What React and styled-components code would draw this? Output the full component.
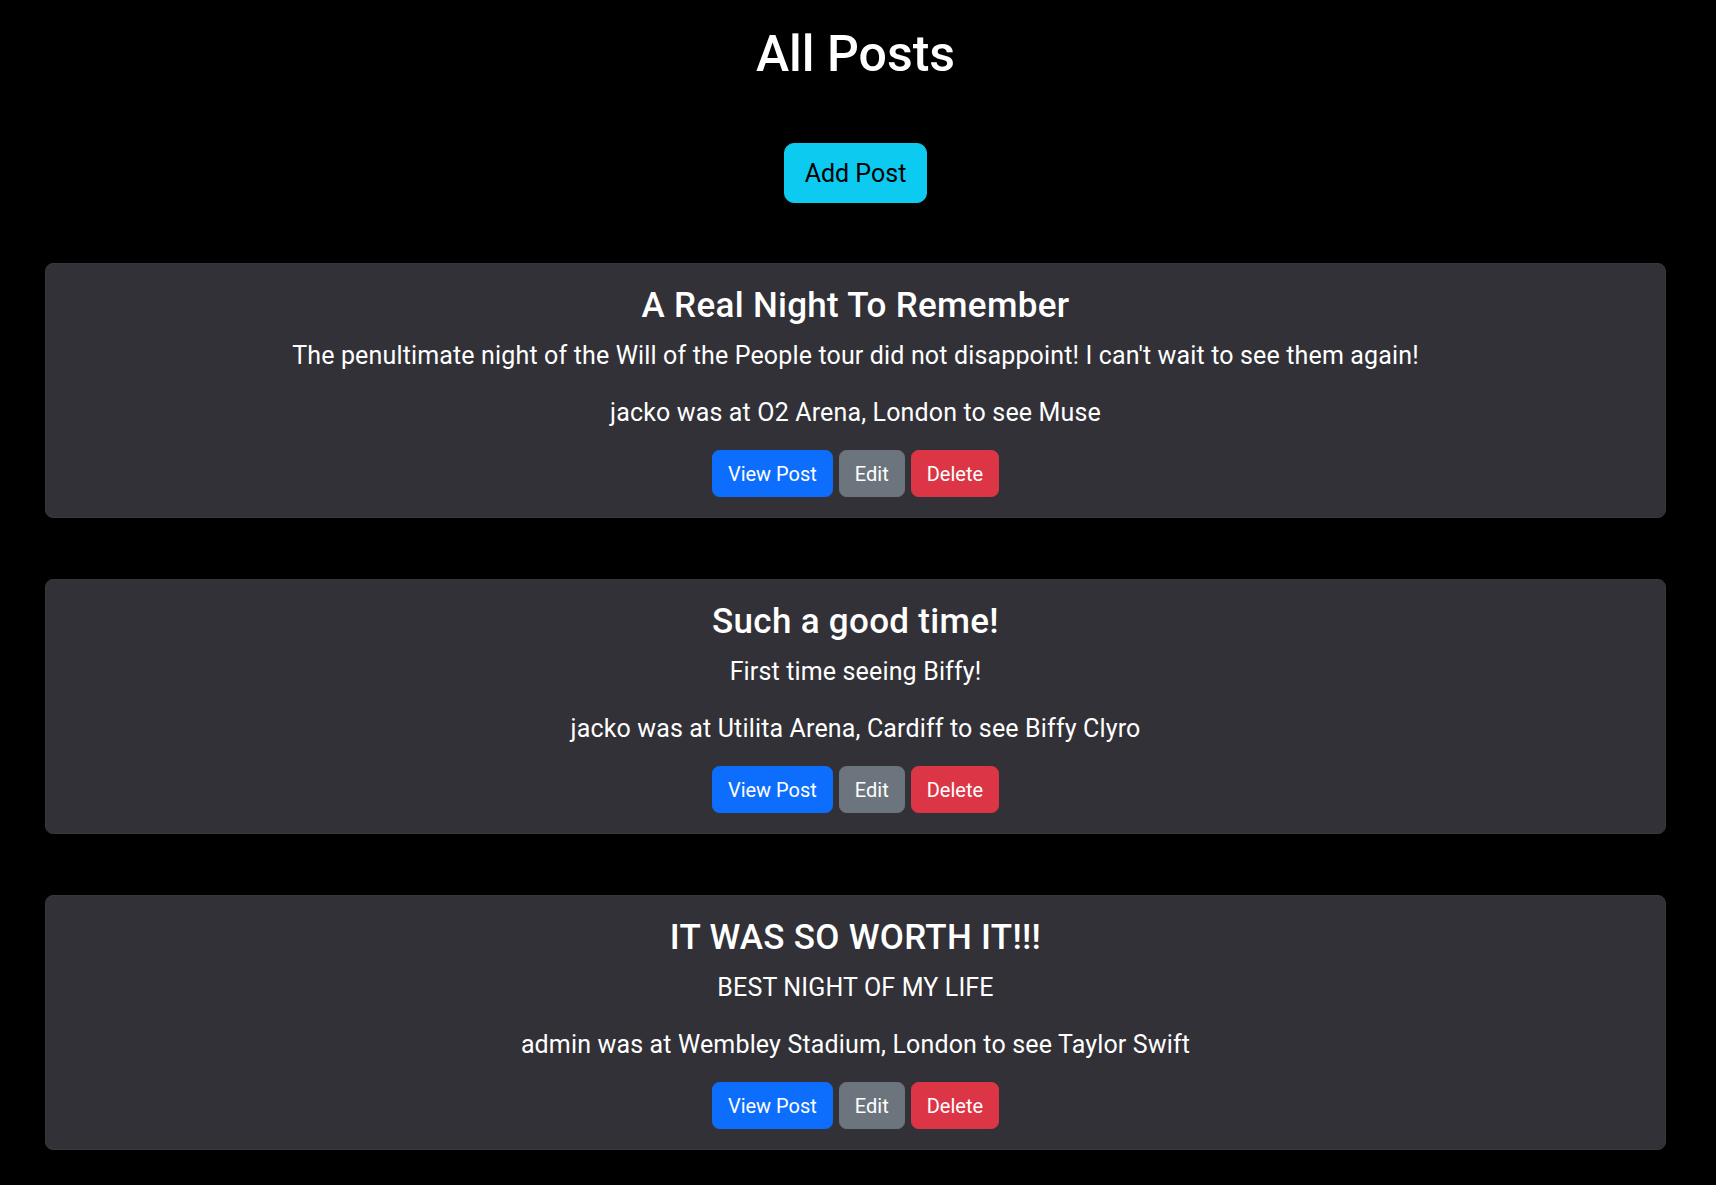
import styled, { createGlobalStyle } from "styled-components";

const GlobalStyle = createGlobalStyle`
    body {
        margin: 0;
        background-color: #000;
        color: #fff;
        font-family: Roboto, "Noto Sans", sans-serif;
    }
`

const Container = styled.div`
    display: flex;
    flex-direction: column;
    align-items: center;
    padding: 24px 50px 36px 45px;
`

const Title = styled.h1`
    margin: 0;
    font-size: 50px;
    font-weight: 500;
    line-height: 1.2;
`

const AddButton = styled.button`
    margin-top: 59px;
    height: 60px;
    padding: 0 20px;
    font-family: inherit;
    font-size: 25px;
    color: #000;
    background-color: #0dcaf0;
    border: 1px solid #0dcaf0;
    border-radius: 10px;
    cursor: pointer;
`

const PostList = styled.div`
    width: 100%;
    margin-top: 60px;
    display: flex;
    flex-direction: column;
    gap: 61px;
`

const Card = styled.div`
    background-color: #323137;
    border: 1px solid #38373d;
    border-radius: 8px;
    padding: 21px 20px 20px;
    text-align: center;
`

const CardTitle = styled.h3`
    margin: 0 0 10px;
    font-size: 35px;
    font-weight: 500;
    line-height: 1.2;
    letter-spacing: 0.3px;
`

const CardText = styled.p`
    margin: 0 0 19px;
    font-size: 25px;
    line-height: 1.5;
    letter-spacing: 0.15px;
`

const Actions = styled.div`
    display: flex;
    justify-content: center;
    gap: 6px;
`

const colors = {
    primary: "#0d6efd",
    secondary: "#6c757d",
    danger: "#dc3545",
};

const ActionButton = styled.button`
    height: 47px;
    padding: 0 15px;
    font-family: inherit;
    font-size: 20px;
    color: #fff;
    background-color: ${props => colors[props.variant]};
    border: 1px solid ${props => colors[props.variant]};
    border-radius: 7.5px;
    cursor: pointer;
`

const posts = [
    {
        title: "A Real Night To Remember",
        body: "The penultimate night of the Will of the People tour did not disappoint! I can't wait to see them again!",
        user: "jacko",
        venue: "O2 Arena, London",
        artist: "Muse",
    },
    {
        title: "Such a good time!",
        body: "First time seeing Biffy!",
        user: "jacko",
        venue: "Utilita Arena, Cardiff",
        artist: "Biffy Clyro",
    },
    {
        title: "IT WAS SO WORTH IT!!!",
        body: "BEST NIGHT OF MY LIFE",
        user: "admin",
        venue: "Wembley Stadium, London",
        artist: "Taylor Swift",
    },
];

const App = () => {
    return (
        <Container>
            <GlobalStyle />
            <Title>All Posts</Title>
            <AddButton>Add Post</AddButton>
            <PostList>
                {posts.map((post, index) => (
                    <Card key={index}>
                        <CardTitle>{post.title}</CardTitle>
                        <CardText>{post.body}</CardText>
                        <CardText>
                            {post.user} was at {post.venue} to see {post.artist}
                        </CardText>
                        <Actions>
                            <ActionButton variant="primary">View Post</ActionButton>
                            <ActionButton variant="secondary">Edit</ActionButton>
                            <ActionButton variant="danger">Delete</ActionButton>
                        </Actions>
                    </Card>
                ))}
            </PostList>
        </Container>
    );
}

export default App;
